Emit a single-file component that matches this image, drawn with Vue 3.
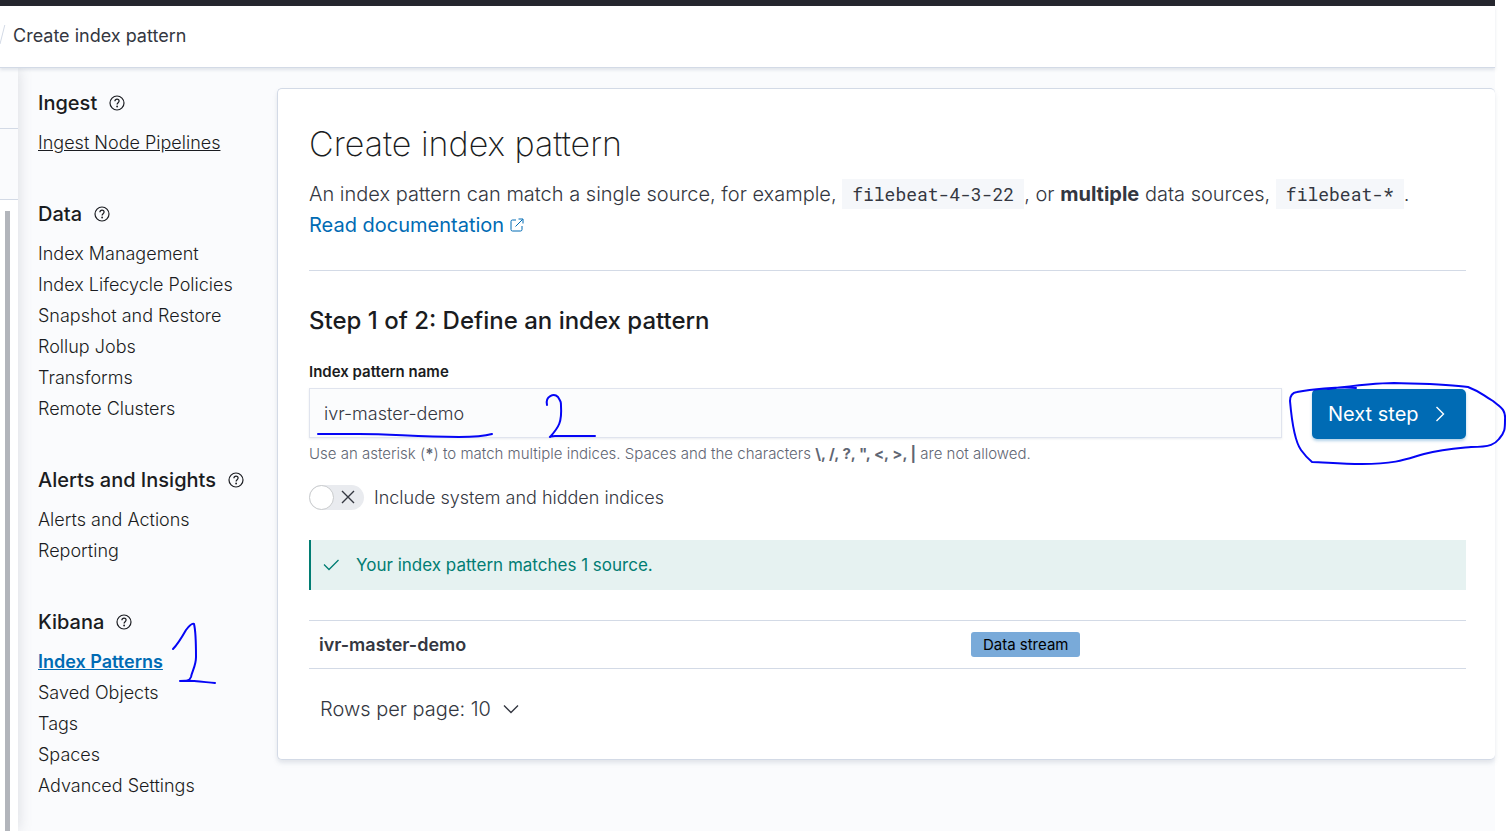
<script setup>
import { ref } from 'vue'

const sections = [
  { title: 'Ingest', items: [{ label: 'Ingest Node Pipelines', underlined: true }] },
  {
    title: 'Data',
    items: [
      { label: 'Index Management' },
      { label: 'Index Lifecycle Policies' },
      { label: 'Snapshot and Restore' },
      { label: 'Rollup Jobs' },
      { label: 'Transforms' },
      { label: 'Remote Clusters' },
    ],
  },
  { title: 'Alerts and Insights', items: [{ label: 'Alerts and Actions' }, { label: 'Reporting' }] },
  {
    title: 'Kibana',
    items: [
      { label: 'Index Patterns', active: true },
      { label: 'Saved Objects' },
      { label: 'Tags' },
      { label: 'Spaces' },
      { label: 'Advanced Settings' },
    ],
  },
]

const pattern = ref('ivr-master-demo')
const includeHidden = ref(false)
</script>

<template>
  <div class="page">
    <div class="topbar"></div>
    <header class="header">
      <nav class="crumbs" aria-label="Breadcrumbs">
        <svg class="slash" width="6" height="20" viewBox="0 0 6 20"><path d="M4.8 0 0 19" /></svg>
        <span>Create index pattern</span>
      </nav>
    </header>

    <div class="body">
      <div class="rail">
        <div class="rail-one"></div>
        <div class="rail-two"></div>
        <div class="rail-scroll"><div class="thumb"></div></div>
      </div>

      <nav class="side" aria-label="Management">
        <section v-for="s in sections" :key="s.title" class="group">
          <h2 class="group-title">
            <span>{{ s.title }}</span>
            <svg class="help" width="16" height="16" viewBox="0 0 16 16">
              <circle cx="8" cy="8" r="7" />
              <path d="M5.9 6.3c0-1.3.9-2.1 2.1-2.1s2.1.8 2.1 1.9c0 1.6-2 1.6-2 3.3" />
              <circle class="dot" cx="8.1" cy="11.5" r=".9" />
            </svg>
          </h2>
          <ul>
            <li v-for="i in s.items" :key="i.label">
              <a href="#" :class="{ underlined: i.underlined, active: i.active }">{{ i.label }}</a>
              <svg v-if="i.active" class="ink ink-one" width="50" height="66" viewBox="0 0 50 66">
                <path d="M5 29C10 24 14 17 18 10C21 6 24 3 26 4C28 12 28 22 28 37C28 46 24 51 23 57C21 62 17 61 12 61C22 60 35 62 47 63" />
              </svg>
            </li>
          </ul>
        </section>
      </nav>

      <main class="panel">
        <h1>Create index pattern</h1>
        <p class="intro">
          An index pattern can match a single source, for example, <code>filebeat-4-3-22</code>, or
          <strong>multiple</strong> data sources, <code>filebeat-*</code>.<br />
          <a href="#">Read documentation<svg class="ext" width="14" height="14" viewBox="0 0 14 14">
            <path d="M6 2H2.5Q1 2 1 3.500V11.500Q1 13 2.500 13H10.500Q12 13 12 11.500V8M5.500 8.500 12.500 1.500M8.500 1H13V5.500" />
          </svg></a>
        </p>
        <hr />
        <h2 class="step">Step 1 of 2: Define an index pattern</h2>
        <form @submit.prevent>
          <label class="label" for="pattern">Index pattern name</label>
          <div class="row">
            <div class="field">
              <input id="pattern" v-model="pattern" type="text" aria-describedby="pattern-help" />
              <svg class="ink ink-two" width="300" height="60" viewBox="0 0 300 60">
                <path d="M9 46H50C85 46 105 49 150 49C165 49 176 48 183 46" />
                <path d="M238 17C236 8 245 5 249 9C252 14 252 14 252 18C253 34 250 39 241 49C240 49 243 48 246 48H286" />
              </svg>
            </div>
            <div class="action">
              <button type="submit" class="next">
                <span>Next step</span>
                <svg width="16" height="16" viewBox="0 0 16 16"><path d="m4.500 1 7 7-7 7" /></svg>
              </button>
              <svg class="ink ink-loop" width="220" height="88" viewBox="0 0 220 88">
                <path d="M72 9C55 7 24 11 13 13Q6 14 6 22C8 45 12 64 17 71Q22 78 28 83C39 83 55 85 78 85C115 85 125 79 140 75C160 70 178 69 187 68C207 68 211 65 215 60C221 53 221 50 221 41C222 30 216 28 209 22C197 15 199 14 184 8C165 5 145 5 110 4C95 4 75 6 44 10" />
              </svg>
            </div>
          </div>
          <p id="pattern-help" class="hint">
            Use an asterisk (<strong>*</strong>) to match multiple indices. Spaces and the characters
            <strong>\, /, ?, ", &lt;, &gt;, |</strong> are not allowed.
          </p>
          <label class="switch">
            <input v-model="includeHidden" type="checkbox" role="switch" />
            <span class="track">
              <span class="knob"></span>
              <svg width="14" height="14" viewBox="0 0 14 14"><path d="m1 1 12 12M13 1 1 13" /></svg>
            </span>
            <span>Include system and hidden indices</span>
          </label>
        </form>

        <div class="callout" role="status">
          <svg width="16" height="12" viewBox="0 0 16 12"><path d="m1 5.500 5 5L15.500 1" /></svg>
          <span>Your index pattern matches 1 source.</span>
        </div>

        <table>
          <tbody>
            <tr>
              <th scope="row">ivr-master-demo</th>
              <td><span class="badge">Data stream</span></td>
            </tr>
          </tbody>
        </table>

        <button type="button" class="rows">
          <span>Rows per page: 10</span>
          <svg width="16" height="10" viewBox="0 0 16 10"><path d="m1 1.500 7 7 7-7" /></svg>
        </button>
      </main>
    </div>
  </div>
</template>

<style>
body {
  margin: 0;
  background: #fff;
}
</style>

<style scoped>
* {
  box-sizing: border-box;
}
.page {
  display: flex;
  flex-direction: column;
  min-height: 100vh;
  padding-right: 11px;
  overflow: hidden;
  font-family: Inter, "Liberation Sans", sans-serif;
  font-size: 18px;
  color: #343741;
}
h1, h2, p, ul {
  margin: 0;
  padding: 0;
}
ul {
  list-style: none;
}
svg {
  fill: none;
  stroke: currentColor;
  flex: none;
}
.topbar {
  height: 6px;
  background: #25262e;
}
.header {
  position: relative;
  height: 62px;
  border-bottom: 1px solid #d3dae6;
  box-shadow: 0 2px 3px rgba(152, 162, 179, 0.25);
  background: #fff;
}
.crumbs {
  display: flex;
  align-items: center;
  gap: 7px;
  height: 58px;
}
.slash {
  stroke: #d3dae6;
}
.body {
  display: flex;
  flex: 1;
  background: #fafbfd;
}
.rail {
  display: flex;
  flex-direction: column;
  width: 18px;
  box-shadow: 1px 0 14px rgba(105, 112, 125, 0.2);
}
.rail-one {
  height: 61px;
  border-bottom: 1px solid #d3dae6;
}
.rail-two {
  height: 71px;
  border-bottom: 1px solid #d3dae6;
}
.rail-scroll {
  display: flex;
  flex: 1;
  padding: 11px 8px 0 5px;
  background: #fff;
}
.thumb {
  width: 5px;
  background: #b2b5bb;
}
.side {
  width: 259px;
  padding: 20px 0 0 20px;
}
.group {
  margin-bottom: 41px;
}
.group:last-child {
  margin-bottom: 0;
}
.group-title {
  display: flex;
  align-items: center;
  gap: 12px;
  height: 30px;
  margin-bottom: 9px;
  font-size: 20px;
  font-weight: 500;
  color: #1a1c21;
}
.help {
  stroke-width: 1.2;
}
.dot {
  fill: currentColor;
  stroke: none;
}
li {
  position: relative;
  line-height: 31px;
}
li a {
  font-weight: 300;
  color: #1a1c21;
  text-decoration: none;
}
li a.underlined {
  text-decoration: underline;
}
li a.active {
  font-weight: 600;
  color: #006bb4;
  text-decoration: underline;
}
.ink {
  position: absolute;
  stroke: #0505f5;
  stroke-width: 2;
  stroke-linecap: round;
  stroke-linejoin: round;
  pointer-events: none;
}
.ink-one {
  left: 130px;
  top: -26px;
}
.panel {
  flex: 1;
  align-self: flex-start;
  min-width: 0;
  margin-top: 20px;
  padding: 30px 29px 30px 31px;
  border: 1px solid #d3dae6;
  border-right: 0;
  border-radius: 5px;
  background: #fff;
  box-shadow: 0 3px 4px rgba(152, 162, 179, 0.25);
}
h1 {
  font-size: 34px;
  font-weight: 200;
  line-height: 50px;
  color: #1a1c21;
}
.intro {
  margin-top: 10px;
  font-size: 20px;
  font-weight: 300;
  line-height: 31px;
}
strong {
  font-weight: 700;
}
code {
  padding: 3px 10px;
  background: #f5f7fa;
  font-family: "Roboto Mono", "DejaVu Sans Mono", monospace;
  font-size: 18px;
  font-weight: 400;
}
.intro a {
  color: #006bb4;
  font-weight: 400;
  text-decoration: none;
}
.ext {
  margin-left: 6px;
}
hr {
  height: 1px;
  margin: 29px 0 0;
  border: 0;
  background: #d3dae6;
}
.step {
  margin-top: 30px;
  font-size: 24px;
  font-weight: 500;
  line-height: 40px;
  color: #1a1c21;
}
.label {
  display: block;
  margin-top: 21px;
  margin-bottom: 6px;
  font-size: 15px;
  font-weight: 600;
  line-height: 20px;
  color: #1a1c21;
}
.row {
  display: flex;
  gap: 30px;
}
.field {
  position: relative;
  flex: 1;
}
.field input {
  display: block;
  width: 100%;
  height: 50px;
  padding: 0 14px;
  border: 1px solid #e0e4ee;
  border-radius: 0;
  outline: 0;
  background: #fbfcfd;
  box-shadow: 0 1px 2px rgba(152, 162, 179, 0.2);
  font: inherit;
  font-weight: 300;
  color: #343741;
}
.ink-two {
  left: 0;
  top: 0;
}
.action {
  position: relative;
  padding-top: 1px;
}
.next {
  display: flex;
  align-items: center;
  justify-content: space-between;
  width: 154px;
  height: 50px;
  padding: 0 18px 0 16px;
  border: 0;
  border-radius: 5px;
  background: #006bb4;
  box-shadow: 0 2px 3px rgba(0, 107, 180, 0.3);
  font: inherit;
  font-size: 20px;
  color: #fff;
}
.next svg {
  stroke-width: 1.4;
}
.ink-loop {
  left: -28px;
  top: -9px;
  overflow: visible;
}
.hint {
  margin-top: 5px;
  font-size: 15px;
  font-weight: 300;
  line-height: 20px;
  color: #5f6673;
}
.switch {
  display: flex;
  align-items: center;
  gap: 10px;
  height: 26px;
  margin-top: 20px;
  font-weight: 300;
}
.switch input {
  position: absolute;
  opacity: 0;
}
.track {
  display: flex;
  align-items: center;
  gap: 7px;
  width: 55px;
  height: 25px;
  border-radius: 13px;
  background: #e9ebef;
}
.knob {
  width: 25px;
  height: 25px;
  border: 1px solid #c9cbcd;
  border-radius: 50%;
  background: #fff;
}
.track svg {
  stroke-width: 1.4;
}
.callout {
  display: flex;
  align-items: center;
  gap: 17px;
  height: 50px;
  margin-top: 30px;
  padding-left: 12px;
  border-left: 2px solid #017d73;
  background: #e6f2f1;
  font-size: 17px;
  color: #017d73;
}
.callout svg {
  stroke-width: 1.3;
}
table {
  width: 100%;
  margin-top: 30px;
  border-collapse: collapse;
  table-layout: fixed;
}
th,
td {
  height: 48px;
  padding: 0 10px;
  border-top: 1px solid #d3dae6;
  border-bottom: 1px solid #d3dae6;
  text-align: left;
}
th {
  width: 56%;
  font-weight: 600;
}
td {
  padding-left: 14px;
}
.badge {
  display: inline-block;
  padding: 0 12px;
  border-radius: 3px;
  background: #79aad9;
  font-size: 15px;
  line-height: 25px;
  color: #000;
}
.rows {
  display: flex;
  align-items: center;
  gap: 12px;
  height: 40px;
  margin-top: 20px;
  padding: 0 11px;
  border: 0;
  background: none;
  font: inherit;
  font-size: 20px;
  font-weight: 300;
  color: #343741;
}
.rows svg {
  stroke-width: 1.4;
}
</style>
